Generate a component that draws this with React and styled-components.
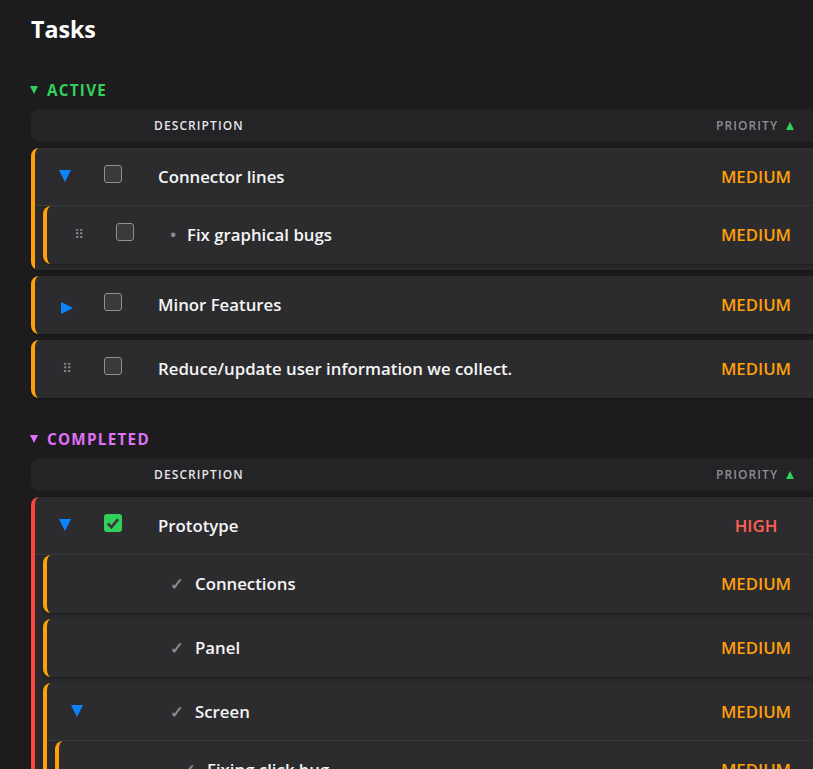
import React from "react";
import styled, { createGlobalStyle } from "styled-components";

const GlobalStyle = createGlobalStyle`
  html, body {
    margin: 0;
    height: 100%;
    overflow: hidden;
    background: #1c1c1e;
  }
  * {
    box-sizing: border-box;
  }
`;

const sections = [
  {
    title: "ACTIVE",
    color: "#30d158",
    tasks: [
      {
        name: "Connector lines",
        priority: "MEDIUM",
        control: "open",
        box: "empty",
        children: [
          { name: "Fix graphical bugs", priority: "MEDIUM", control: "drag", box: "empty", marker: "•" },
        ],
      },
      { name: "Minor Features", priority: "MEDIUM", control: "closed", box: "empty" },
      { name: "Reduce/update user information we collect.", priority: "MEDIUM", control: "drag", box: "empty" },
    ],
  },
  {
    title: "COMPLETED",
    color: "#e070f8",
    tasks: [
      {
        name: "Prototype",
        priority: "HIGH",
        control: "open",
        box: "checked",
        children: [
          { name: "Connections", priority: "MEDIUM", marker: "✓" },
          { name: "Panel", priority: "MEDIUM", marker: "✓" },
          {
            name: "Screen",
            priority: "MEDIUM",
            control: "open",
            marker: "✓",
            children: [{ name: "Fixing click bug", priority: "MEDIUM", marker: "✓" }],
          },
        ],
      },
    ],
  },
];

const priorityColors = { MEDIUM: "#ff9f0a", HIGH: "#ff5f57" };
const borderColors = { MEDIUM: "#ff9f0a", HIGH: "#ff453a" };

const Triangle = ({ direction, color, size }) => {
  const points = { down: "0,0 10,0 5,10", right: "0,0 10,5 0,10", up: "0,10 10,10 5,0" };
  return (
    <svg width={size} height={size} viewBox="0 0 10 10" style={{ display: "block", flex: "none" }}>
      <polygon points={points[direction]} fill={color} />
    </svg>
  );
};

const TaskRow = ({ task }) => (
  <Group $color={borderColors[task.priority]}>
    <RowBody $parent={!!task.children}>
      <ControlCell $kind={task.control}>
        {task.control === "open" && <Triangle direction="down" color="#0a84ff" size={12} />}
        {task.control === "closed" && <Triangle direction="right" color="#0a84ff" size={12} />}
        {task.control === "drag" && <DragHandle>⠿</DragHandle>}
      </ControlCell>
      <BoxCell>
        {task.box === "empty" && <Checkbox />}
        {task.box === "checked" && (
          <Checkbox $checked>
            <svg width="16" height="16" viewBox="0 0 14 14">
              <path d="M2.5 7.5 L5.6 10.6 L11.5 3.6" fill="none" stroke="#3a3a3c" strokeWidth="2.4" />
            </svg>
          </Checkbox>
        )}
      </BoxCell>
      <NameCell>
        {task.marker === "•" && <Bullet>•</Bullet>}
        {task.marker === "✓" && <Tick>✓</Tick>}
        {task.name}
      </NameCell>
      <PriorityCell $color={priorityColors[task.priority]}>{task.priority}</PriorityCell>
    </RowBody>
    {task.children && (
      <Children>
        {task.children.map((child) => (
          <TaskRow key={child.name} task={child} />
        ))}
      </Children>
    )}
  </Group>
);

const App = () => (
  <Page>
    <GlobalStyle />
    <Title>Tasks</Title>
    {sections.map((section) => (
      <Section key={section.title}>
        <SectionLabel $color={section.color}>
          <Triangle direction="down" color={section.color} size={8} />
          {section.title}
        </SectionLabel>
        <HeaderRow>
          <HeaderDescription>DESCRIPTION</HeaderDescription>
          <HeaderPriority>
            PRIORITY
            <Triangle direction="up" color="#30d158" size={8} />
          </HeaderPriority>
        </HeaderRow>
        {section.tasks.map((task) => (
          <TaskRow key={task.name} task={task} />
        ))}
      </Section>
    ))}
  </Page>
);

const Page = styled.div`
  width: 831px;
  padding: 13px 0 0 31px;
  font-family: "Open Sans", "Noto Sans", sans-serif;
  color: #f5f5f7;
`;

const Title = styled.h1`
  margin: 0 0 34px;
  font-size: 23.2px;
  line-height: 33px;
  font-weight: 700;
  color: #ffffff;
`;

const Section = styled.section`
  margin-bottom: 31px;
`;

const SectionLabel = styled.div`
  display: flex;
  align-items: center;
  gap: 9px;
  margin-left: -1px;
  height: 20px;
  font-size: 15.2px;
  line-height: 18px;
  font-weight: 700;
  letter-spacing: 1.3px;
  color: ${(props) => props.$color};
  margin-bottom: 9px;
`;

const HeaderRow = styled.div`
  display: flex;
  align-items: center;
  justify-content: space-between;
  height: 33px;
  padding: 0 35px 0 123px;
  margin-bottom: 6px;
  background: #242426;
  border-radius: 8px;
  font-size: 12px;
  font-weight: 600;
  letter-spacing: 1.1px;
`;

const HeaderDescription = styled.span`
  color: #e5e5ea;
`;

const HeaderPriority = styled.span`
  display: flex;
  align-items: center;
  gap: 8px;
  width: 80px;
  color: #8e8e93;
`;

const Group = styled.div`
  margin-bottom: 6px;
  background: #2c2c2e;
  border-left: 4px solid ${(props) => props.$color};
  border-radius: 8px;
  box-shadow: 0 1px 3px rgba(0, 0, 0, 0.3);
`;

const RowBody = styled.div`
  display: flex;
  align-items: center;
  height: 58px;
  border-bottom: 1px solid ${(props) => (props.$parent ? "#3a3a3c" : "transparent")};
`;

const ControlCell = styled.div`
  display: flex;
  justify-content: center;
  width: 60px;
  padding-left: ${(props) => (props.$kind === "drag" ? "4px" : props.$kind === "closed" ? "3px" : "0")};
  margin-bottom: ${(props) => (props.$kind === "open" ? "1px" : "0")};
  margin-top: ${(props) => (props.$kind === "closed" ? "7px" : "0")};
`;

const DragHandle = styled.span`
  font-family: "DejaVu Sans", sans-serif;
  font-size: 13px;
  line-height: 14px;
  color: #8e8e93;
`;

const BoxCell = styled.div`
  width: 63px;
  padding-left: 9px;
  height: 18px;
  margin-bottom: 5px;
`;

const Checkbox = styled.div`
  display: flex;
  align-items: center;
  justify-content: center;
  width: 18px;
  height: 18px;
  border-radius: 3px;
  border: ${(props) => (props.$checked ? "none" : "1px solid #8e8e93")};
  background: ${(props) => (props.$checked ? "#30d158" : "#3a3a3c")};
`;

const NameCell = styled.div`
  flex: 1;
  display: flex;
  align-items: center;
  font-size: 16.8px;
  font-weight: 600;
  color: #f5f5f7;
`;

const Bullet = styled.span`
  flex: none;
  width: 17px;
  color: #8e8e93;
`;

const Tick = styled.span`
  flex: none;
  width: 25px;
  font-family: "DejaVu Sans", sans-serif;
  font-weight: 700;
  -webkit-text-stroke: 0.4px #8e8e93;
  color: #8e8e93;
`;

const PriorityCell = styled.div`
  width: 80px;
  margin-right: 35px;
  text-align: center;
  font-size: 16.8px;
  font-weight: 600;
  color: ${(props) => props.$color};
`;

const Children = styled.div`
  display: flow-root;
  padding-left: 8px;
  background: #29292b;
  border-radius: 0 0 8px 0;
`;

export default App;
